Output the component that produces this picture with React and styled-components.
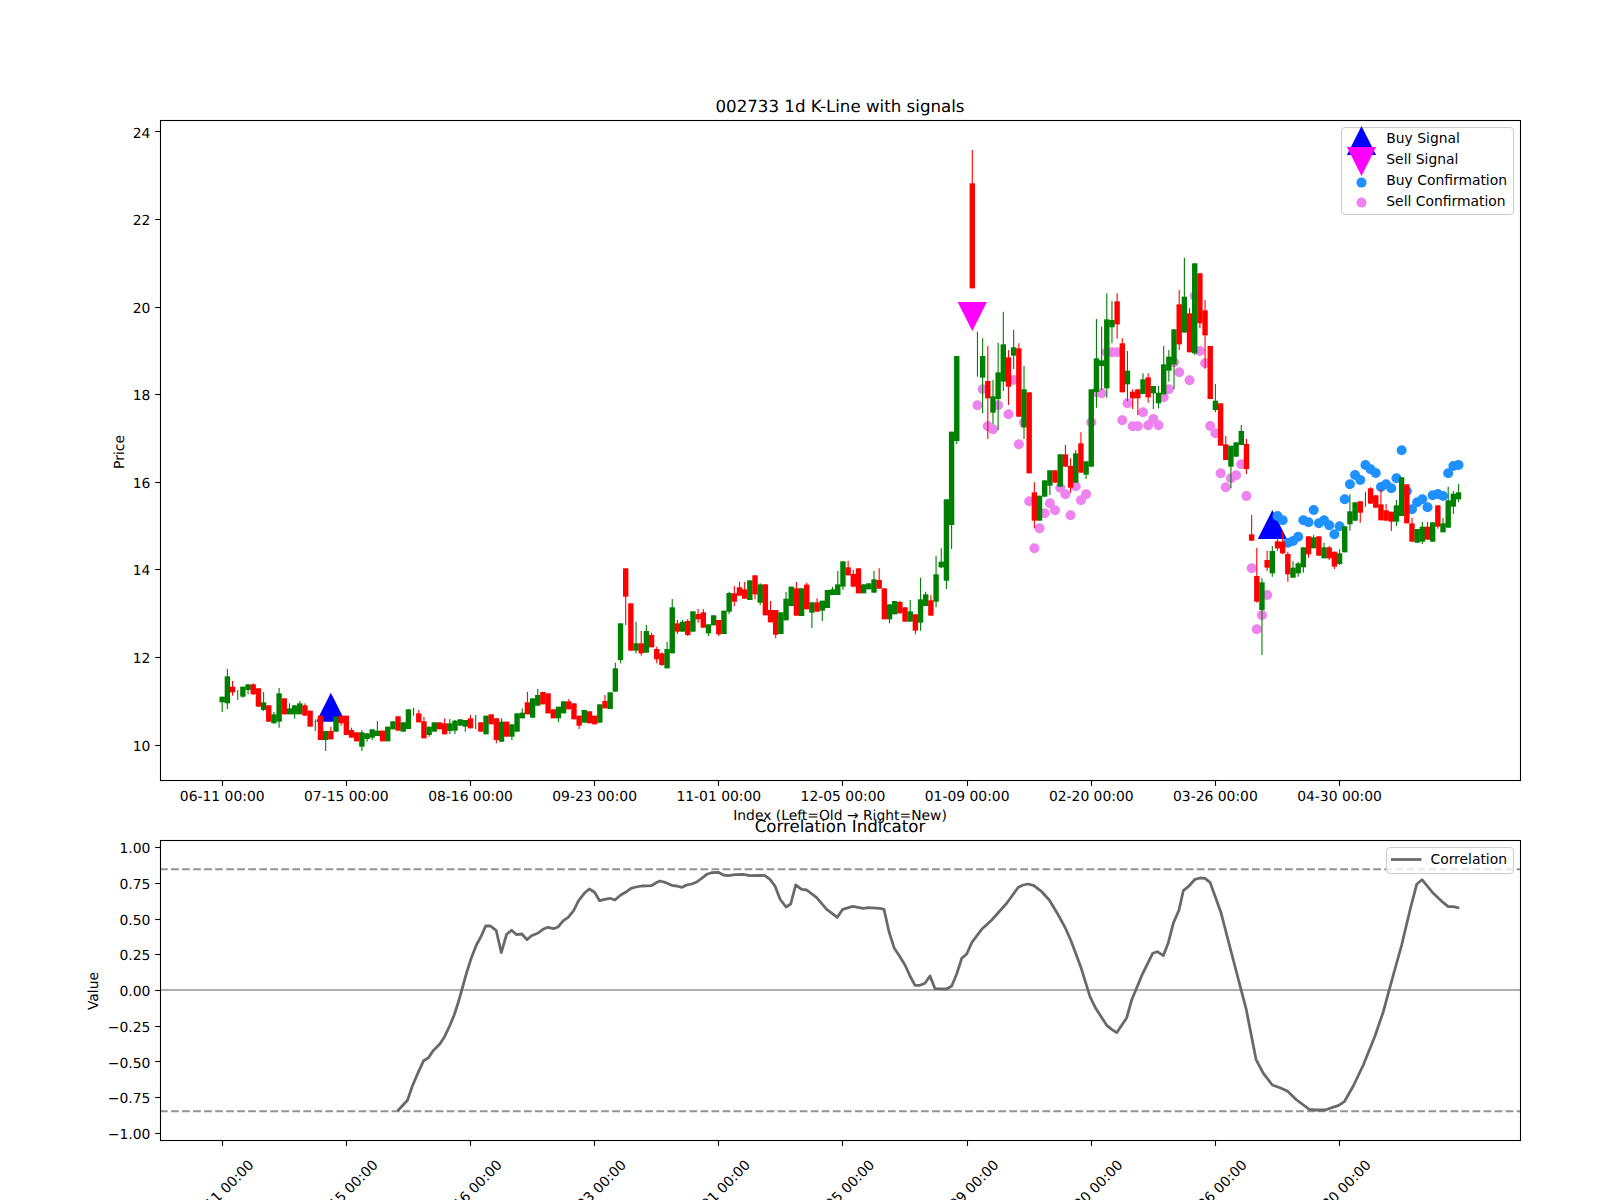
import React from "react";
import styled, { createGlobalStyle } from "styled-components";

const GlobalStyle = createGlobalStyle`
  html, body {
    margin: 0;
    background: #fff;
  }
  body {
    font-family: "DejaVu Sans", sans-serif;
  }
`;

const Figure = styled.div`
  width: 1600px;
  height: 1200px;
  display: flex;
  flex-direction: column;
  background: #fff;
  overflow: hidden;
`;

const Panel = styled.div`
  position: relative;
  flex: none;
  width: 1600px;
  height: ${(props) => props.$height}px;
`;

const Plot = styled.svg`
  display: block;
  width: 100%;
  height: 100%;
  overflow: visible;
`;

const TickLabel = styled.text`
  font-family: "DejaVu Sans", sans-serif;
  font-size: 13.89px;
  fill: #000;
  text-rendering: geometricPrecision;
`;

const AxisLabel = styled(TickLabel)`
  text-anchor: middle;
`;

const ChartTitle = styled.text`
  font-family: "DejaVu Sans", sans-serif;
  font-size: 16.67px;
  fill: #000;
  text-anchor: middle;
  text-rendering: geometricPrecision;
`;

const Legend = styled.div`
  position: absolute;
  top: ${(props) => props.$top}px;
  right: 86px;
  box-sizing: border-box;
  display: flex;
  flex-direction: column;
  padding: 0 6px 3px 4.4px;
  background: rgba(255, 255, 255, 0.8);
  border: 1px solid #ccc;
  border-radius: 4px;
  font-size: 13.89px;
  color: #000;
`;

const LegendRow = styled.div`
  display: flex;
  align-items: center;
  height: ${(props) => props.$height}px;
  gap: ${(props) => props.$gap}px;
  white-space: nowrap;
`;

const LegendMark = styled.svg`
  flex: none;
  width: ${(props) => props.$width}px;
  height: 21px;
  overflow: visible;
`;

const RED = "#ff0000";
const GREEN = "#008000";
const BLUE = "#0000ff";
const MAGENTA = "#ff00ff";
const DODGER = "#1e90ff";
const VIOLET = "#ee82ee";

const X0 = 222.2;
const STEP = 5.173;
const xOf = (i) => X0 + STEP * i;
const snap = (v) => Math.floor(v) + 0.5;

// candles read off the picture: colour, body top, body bottom, wick top, wick bottom
// each block has its own y origin, values are in 1/3 px
const candleBlocks = [
  {
    y0: 560,
    rows: [
      ["g",410,427,410,456],["g",349,430,326,447],["r",380,397,363,407],["g",405,405,390,420],["g",380,410,380,413],
      ["g",373,390,373,403],["r",373,403,370,405],["r",385,440],["g",427,450,396,453],["r",436,485],
      ["g",463,490,456,490],["g",400,485,384,503],["r",415,463],["g",445,463,430,463],["g",436,463,436,476],
      ["g",430,463,423,463],["r",436,467,430,467],["r",452,500],["g",495,495,478,513],["r",467,540],
      ["g",513,540,513,573],["r",513,538,500,538],["g",470,515],["r",467,490,467,497],["r",467,525],
      ["r",510,533,503,533],["r",517,544],["g",517,560,510,573],["g",520,537,520,545],["g",508,533,508,540],
      ["g",512,528,483,528],["r",512,544],["g",500,544],["g",484,508],["r",469,512],
      ["g",487,515],["g",448,507],["g",455,455,443,467],["r",460,487,450,487],["r",484,535,470,535],
      ["g",500,525,500,530],["g",487,515],["r",487,508],["r",490,523,475,523],["g",490,513,477,522],
      ["g",482,512,480,522],["g",478,497],["g",480,500,480,515],["r",475,505,465,505],["g",485,485,465,507],
      ["r",487,515],["g",467,523],["r",463,493],["r",475,540,475,550],["g",485,545,475,545],
      ["r",485,530],["g",493,530,493,540],["g",460,515],["g",458,475,445,475],["r",427,463,395,463],
      ["g",415,473],["g",405,437,387,437],["r",396,433],["r",400,460],["r",448,475],
      ["g",440,475,440,487],["g",424,460],["r",424,448,418,448],["r",430,478],["r",467,497,467,507],
      ["g",450,488],["r",454,490],["r",467,493],["g",433,488],
    ],
  },
  {
    y0: 540,
    rows: [
      ["r",483,505,465,505],["g",457,507],["g",385,455,368,455],["g",250,360,250,370],["r",85,170,85,255],
      ["r",190,332],["g",310,332,245,340],["r",310,340,273,347],["g",273,338,255,338],["r",285,322,278,322],
      ["r",327,358,320,370],["r",340,375,337,378],["g",327,385,305,385],["g",202,340,177,340],["r",250,275,240,282],
      ["g",245,275,240,275],["r",243,285,237,288],["g",214,275],["r",222,238,207,248],["r",217,263,207,263],
      ["g",253,280,253,288],["g",226,256],["r",240,283,240,288],["g",212,282],["g",159,215,155,222],
      ["r",160,185,138,198],["r",142,167,125,167],["r",148,176,125,176],["g",121,180],["r",106,163,106,178],
      ["g",133,188,130,196],["r",133,226],["r",210,247,183,247],["r",210,284,210,295],["g",217,282],
      ["g",176,241,156,241],["g",140,198],["r",145,227,126,227],["g",145,228],["r",134,208,128,208],
      ["g",187,218,187,265],["r",187,215,175,215],["g",182,212,182,243],["g",150,204],["g",148,165,140,165],
      ["g",133,165,93,165],["g",64,140,64,150],["r",82,106,62,106],["r",102,140,90,140],["r",85,160],
      ["g",133,160],["g",130,148],["g",118,158,93,158],["r",120,146,85,146],["r",145,238],
      ["g",193,238,193,250],["g",183,223],["r",186,220,182,220],["r",202,245],["g",214,245,180,245],
      ["r",223,272,223,283],["g",178,248,113,272],["g",163,198,155,198],["r",181,227,165,227],["g",103,185,47,202],
      ["g",65,82,25,85],["g",-122,122,-122,147],["g",-325,-45,-325,27],["g",-552,-297,-552,-288],
      null,null,
    ],
  },
  {
    y0: 330,
    rows: [
      ["r",-440,-125,-540,-125],["g",70,70,5,140],["g",78,143,25,250],["r",153,205,48,327],["g",199,248,150,283],
      ["g",127,207,38,300],["g",43,155,-55,183],["r",82,170,60,225],["g",52,77,0,117],["r",55,260,40,260],
      ["g",178,292,108,327],["r",187,430],["r",487,572,457,595],["g",497,572],["g",451,500],
      ["g",421,467,421,495],["r",421,458],["g",373,470],["r",373,410,345,410],["r",408,473,385,488],
      ["g",370,458,360,458],["r",340,428,307,428],["g",394,434,394,447],["g",178,410],["g",85,186,-33,233],
      ["g",91,108,-10,180],["g",-32,175,-110,203],["g",-30,-8,-87,40],["r",-86,-17,-110,26],["r",40,187,25,187],
      ["g",122,163,63,213],["r",185,205,178,237],["r",178,205,178,255],["g",148,192,130,192],["r",142,202,130,218],
      ["g",168,190,168,237],["g",188,220,168,235],["g",103,193,48,193],["g",80,122,60,155],["g",-2,103,-2,178],
      ["r",-77,43,-120,60],["g",-100,7,-217,7],["r",-50,67,-65,67],["g",-200,70,-200,75],["r",-170,-20,-170,-5],
      ["r",-59,16,-90,116],["r",48,207],["g",212,240,162,247],["r",220,347],["r",343,390,318,390],
      ["g",347,410,347,475],["g",337,380],["g",303,345,285,345],["r",342,417,327,432],
    ],
  },
  {
    y0: 430,
    rows: [
      ["r",313,332,255,332],["r",438,515,353,518],["g",457,540,445,675],["r",390,413,362,423],["g",363,430,348,440],
      ["r",334,355,322,362],["r",335,370,303,373],["r",372,433,365,455],["g",413,443,393,443],["g",400,430,395,440],
      ["g",352,412,352,428],["r",319,373,319,383],["g",322,355,315,355],["r",319,377],["g",352,385,338,385],
      ["r",352,385,347,390],["r",365,410,365,417],["g",370,402,358,405],["g",289,367],["g",244,283,193,302],
      ["g",217,272],["r",214,248,214,278],["g",208,208,185,230],["r",175,221,172,221],["r",196,233],
      ["r",223,271,177,271],["r",241,272,222,272],["r",245,275,245,303],["g",226,275,210,288],["g",142,258],
      ["r",163,280],["r",280,335,263,335],["g",297,338],["g",290,335,276,342],["r",290,329,276,329],
      ["g",277,335],["r",226,290,226,296],["g",280,307,264,307],["g",211,293,170,293],["g",191,230,183,252],
      ["g",187,208,162,216],
    ],
  },
];

const candles = candleBlocks.flatMap(({ y0, rows }) =>
  rows.map((row) => {
    if (!row) return null;
    const [c, top, bot, wt = top, wb = bot] = row;
    return {
      color: c === "r" ? RED : GREEN,
      top: y0 + top / 3,
      bot: y0 + bot / 3,
      wickTop: y0 + wt / 3,
      wickBot: y0 + wb / 3,
    };
  })
);

const sellDots = [
  [146,226],[147,178],[148,289],[149,298],[150,226],[152,253],[153,150],[154,343],[155,278],[156,514],
  [157,655],[158,595],[159,550],[160,520],[161,541],[162,473],[163,493],[164,556],[165,469],[166,511],
  [167,493],[168,277],[169,187],[170,190],[171,67],[172,67],[173,67],[174,271],[175,220],[176,289],
  [177,289],[178,247],[179,286],[180,267],[181,286],[182,202],[183,178],[184,97],[185,127],[186,-5],
  [187,151],[188,-102],[189,63],[190,100],[191,288],[192,310],[193,430],[194,472],[195,445],[196,436],
  [197,403],[198,498],[199,715],[200,898],[201,856],[202,795],
].map(([i, y]) => [xOf(i), 330 + y / 3]);

const buyDots = [
  258,271,338,333,320,271,277,240,280,271,286,313,289,208,163,135,150,105,118,129,
  171,163,175,145,61,184,238,217,208,232,196,192,198,130,108,105,
].map((y, n) => [xOf(204 + n), 430 + y / 3]);

// correlation line, same kind of reading: origin, x scale, then x,y pairs
const lineBlocks = [
  {
    x0: 60,
    sx: 2.613,
    pts: [
      882,963,908,931,920,890,935,850,950,812,963,803,975,782,992,763,1005,740,1018,708,1030,675,1040,640,1050,600,
      1062,550,1075,503,1088,465,1100,440,1112,408,1125,408,1140,422,1153,488,1167,433,1180,421,1193,434,1207,432,
      1220,449,1232,437,1248,430,1262,418,1275,412,1290,416,1302,410,1315,392,1328,382,1342,362,1355,332,1370,310,
      1383,297,1397,307,1410,332,1423,328,1437,325,1450,330,1465,315,1478,307,1492,295,1505,291,1520,288,1545,287,
      1560,277,
    ],
  },
  {
    x0: 660,
    sx: 3,
    pts: [
      0,273,15,277,35,286,50,288,66,292,80,285,95,282,110,276,125,265,140,253,155,248,175,247,190,255,205,257,225,254,
      250,253,270,257,300,256,315,257,330,268,345,288,360,327,378,351,392,342,407,285,425,298,440,300,470,323,500,358,
      532,382,548,358,578,349,610,355,625,353,660,355,672,358,687,425,703,475,718,497,735,525,750,558,765,586,780,586,
      795,580,810,558,825,596,860,597,875,588,890,552,905,505,920,492,935,458,965,418,995,390,1040,340,1075,292,
      1090,285,1105,282,1122,287,1145,305,1168,330,1195,375,1215,412,1232,450,1262,530,1290,620,1307,655,1340,706,
      1355,718,1370,728,1400,683,1415,630,1447,553,1478,490,1492,485,
    ],
  },
  {
    x0: 1100,
    sx: 3,
    pts: [
      190,497,205,458,220,400,237,360,250,302,265,290,285,268,300,264,315,265,330,277,362,365,400,510,438,655,468,808,
      490,850,517,885,540,893,562,903,590,930,628,958,645,960,675,960,695,953,715,947,733,935,760,888,790,825,825,738,
      850,665,880,555,905,465,930,360,950,283,966,269,1000,310,1030,338,1045,350,1060,350,1078,354,
    ],
  },
];

const linePoints = lineBlocks
  .flatMap(({ x0, sx, pts }) => {
    const out = [];
    for (let n = 0; n < pts.length; n += 2) {
      out.push(`${(x0 + pts[n] / sx).toFixed(1)},${(790 + pts[n + 1] / 3).toFixed(1)}`);
    }
    return out;
  })
  .join(" ");

const dates = [
  "06-11 00:00", "07-15 00:00", "08-16 00:00", "09-23 00:00", "11-01 00:00",
  "12-05 00:00", "01-09 00:00", "02-20 00:00", "03-26 00:00", "04-30 00:00",
];
const tickXs = dates.map((_, k) => xOf(24 * k));

const priceTicks = [24, 22, 20, 18, 16, 14, 12, 10].map((p) => ({
  label: String(p),
  y: 745 - (p - 10) * 43.79,
}));

const valueTicks = ["1.00", "0.75", "0.50", "0.25", "0.00", "−0.25", "−0.50", "−0.75", "−1.00"].map(
  (label, k) => ({ label, y: 847.7 + k * 35.7 })
);

function Triangle({ cx, top, color, down }) {
  const pts = down
    ? `${cx - 14.6},${top} ${cx + 14.6},${top} ${cx},${top + 29}`
    : `${cx},${top} ${cx + 14.6},${top + 29} ${cx - 14.6},${top + 29}`;
  return <polygon points={pts} fill={color} />;
}

function Candle({ candle, i }) {
  const x = xOf(i);
  const height = candle.bot - candle.top;
  return (
    <g>
      <line x1={x} x2={x} y1={candle.wickTop} y2={candle.wickBot} stroke={candle.color} strokeWidth="1.1" />
      {height > 0 && <rect x={x - 2.7} y={candle.top} width="5.4" height={height} fill={candle.color} />}
    </g>
  );
}

function Frame({ top, bottom }) {
  return (
    <rect x="160.5" y={top} width="1360" height={bottom - top} fill="none" stroke="#000" strokeWidth="1.1" />
  );
}

function YTicks({ ticks }) {
  return ticks.map((t) => (
    <g key={t.label}>
      <line x1="155.2" x2="160" y1={snap(t.y)} y2={snap(t.y)} stroke="#000" strokeWidth="1.1" />
      <TickLabel x="150.3" y={t.y + 5.6} textAnchor="end">
        {t.label}
      </TickLabel>
    </g>
  ));
}

function XTickMarks({ y }) {
  return tickXs.map((x) => (
    <line key={x} x1={snap(x)} x2={snap(x)} y1={y} y2={y + 5.4} stroke="#000" strokeWidth="1.1" />
  ));
}

function PriceChart() {
  return (
    <Panel $height={825}>
      <Plot viewBox="0 0 1600 825">
        <rect x="160" y="120" width="1360" height="660" fill="#fff" />
        <Triangle cx={xOf(21)} top={692.7} color={BLUE} />
        <Triangle cx={xOf(203)} top={510} color={BLUE} />
        <Triangle cx={xOf(145)} top={302} color={MAGENTA} down />
        {sellDots.map(([x, y], n) => (
          <circle key={n} cx={x} cy={y} r="5" fill={VIOLET} />
        ))}
        {buyDots.map(([x, y], n) => (
          <circle key={n} cx={x} cy={y} r="5" fill={DODGER} />
        ))}
        {candles.map((c, i) => c && <Candle key={i} candle={c} i={i} />)}
        <Frame top={120.5} bottom={780.5} />
        <YTicks ticks={priceTicks} />
        <XTickMarks y={780.5} />
        {dates.map((d, k) => (
          <AxisLabel key={d} x={tickXs[k]} y={800.8}>
            {d}
          </AxisLabel>
        ))}
        <ChartTitle x="840" y="111.7">
          002733 1d K-Line with signals
        </ChartTitle>
        <AxisLabel x="840" y="820">
          Index (Left=Old → Right=New)
        </AxisLabel>
        <AxisLabel transform="translate(124,452) rotate(-90)">Price</AxisLabel>
      </Plot>
      <Legend $top={127}>
        <LegendRow $height={20.8} $gap={10.6}>
          <LegendMark $width={29}>
            <Triangle cx={14.5} top={-2} color={BLUE} />
          </LegendMark>
          Buy Signal
        </LegendRow>
        <LegendRow $height={20.8} $gap={10.6}>
          <LegendMark $width={29}>
            <Triangle cx={14.5} top={-2} color={MAGENTA} down />
          </LegendMark>
          Sell Signal
        </LegendRow>
        <LegendRow $height={20.8} $gap={10.6}>
          <LegendMark $width={29}>
            <circle cx="14.5" cy="12.6" r="5" fill={DODGER} />
          </LegendMark>
          Buy Confirmation
        </LegendRow>
        <LegendRow $height={20.8} $gap={10.6}>
          <LegendMark $width={29}>
            <circle cx="14.5" cy="12.6" r="5" fill={VIOLET} />
          </LegendMark>
          Sell Confirmation
        </LegendRow>
      </Legend>
    </Panel>
  );
}

function CorrelationChart() {
  return (
    <Panel $height={375}>
      <Plot viewBox="0 825 1600 375">
        <line x1="160" x2="1520" y1="869.3" y2="869.3" stroke="#939393" strokeWidth="2.08" strokeDasharray="7.7 3.33" />
        <line x1="160" x2="1520" y1="1111.3" y2="1111.3" stroke="#939393" strokeWidth="2.08" strokeDasharray="7.7 3.33" />
        <line x1="160" x2="1520" y1="990" y2="990" stroke="#aeaeae" strokeWidth="2.08" />
        <polyline points={linePoints} fill="none" stroke="#696969" strokeWidth="2.78" strokeLinejoin="round" />
        <Frame top={840.5} bottom={1140.5} />
        <YTicks ticks={valueTicks} />
        <XTickMarks y={1140.5} />
        {dates.map((d, k) => (
          <AxisLabel key={d} dominantBaseline="central" transform={`translate(${tickXs[k] - 0.5},1193) rotate(-45)`}>
            {d}
          </AxisLabel>
        ))}
        <ChartTitle x="840" y="832">
          Correlation Indicator
        </ChartTitle>
        <AxisLabel transform="translate(98,991) rotate(-90)">Value</AxisLabel>
      </Plot>
      <Legend $top={22.3}>
        <LegendRow $height={21.5} $gap={9}>
          <LegendMark $width={30.5}>
            <line x1="0" x2="30.5" y1="10.5" y2="10.5" stroke="#696969" strokeWidth="2.78" />
          </LegendMark>
          Correlation
        </LegendRow>
      </Legend>
    </Panel>
  );
}

export default function App() {
  return (
    <>
      <GlobalStyle />
      <Figure>
        <PriceChart />
        <CorrelationChart />
      </Figure>
    </>
  );
}
